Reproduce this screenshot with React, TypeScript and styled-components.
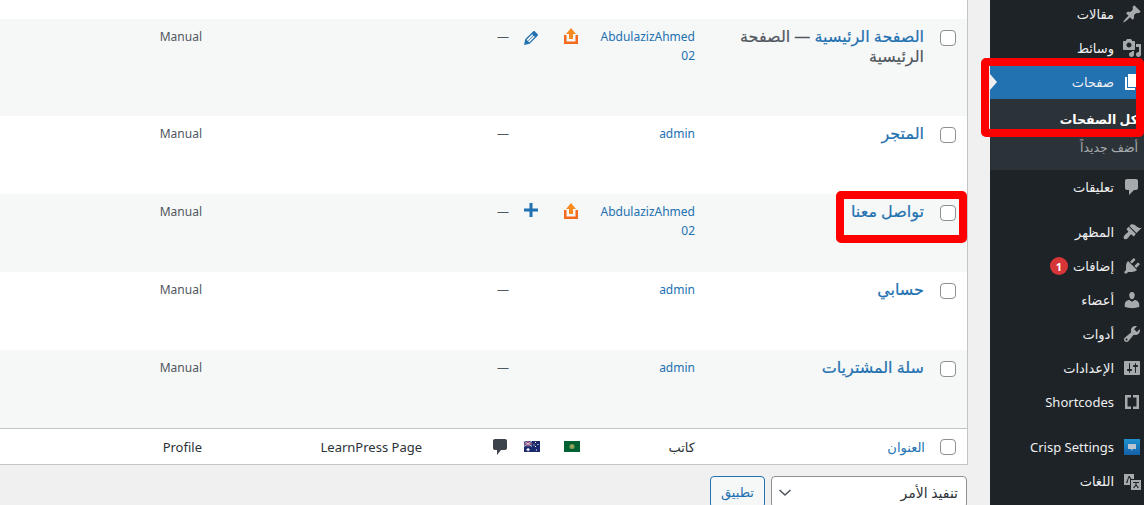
import React from "react";
import styled, { createGlobalStyle } from "styled-components";

const Global = createGlobalStyle`
  html, body { margin: 0; padding: 0; height: 505px; overflow: hidden; background: #f0f0f1; }
  body { direction: rtl; font-family: "Noto Sans", "DejaVu Sans", sans-serif; }
  * { box-sizing: border-box; }
`;

const Page = styled.div`
  display: flex;
  width: 1144px;
  height: 505px;
  overflow: hidden;
  position: relative;
`;

const Sidebar = styled.nav`
  flex: 0 0 154px;
  height: 505px;
  background: #1d2327;
  overflow: hidden;
`;

const MenuList = styled.div`
  margin-top: -3px;
  display: flex;
  flex-direction: column;
`;

const MenuItem = styled.div<{ $active?: boolean; $sep?: boolean }>`
  height: 34px;
  flex: 0 0 34px;
  margin-top: ${(p) => (p.$sep ? "11px" : "0")};
  display: flex;
  align-items: center;
  gap: 8px;
  padding-right: 2px;
  color: #f0f0f1;
  font-size: 13px;
  white-space: nowrap;
  position: relative;
  background: ${(p) => (p.$active ? "#2271b1" : "transparent")};
  svg { flex: 0 0 20px; width: 20px; height: 20px; fill: ${(p) => (p.$active ? "#fff" : "#a7aaad")}; }
`;

const Pointer = styled.span`
  position: absolute;
  left: 0;
  top: 9px;
  border-left: 7px solid #f0f0f1;
  border-top: 8px solid transparent;
  border-bottom: 8px solid transparent;
`;

const SubMenu = styled.div`
  background: #2c3338;
  height: 71px;
  padding: 7px 6px 0 0;
`;

const SubItem = styled.div<{ $current?: boolean }>`
  height: 28px;
  line-height: 28px;
  font-size: 12.5px;
  white-space: nowrap;
  font-weight: ${(p) => (p.$current ? 700 : 400)};
  color: ${(p) => (p.$current ? "#fff" : "#a7aaad")};
`;

const Badge = styled.span`
  display: inline-flex;
  align-items: center;
  justify-content: center;
  width: 18px;
  height: 18px;
  margin-right: -3px;
  border-radius: 50%;
  background: #d63638;
  color: #fff;
  font-size: 11px;
  font-weight: 700;
`;

const Main = styled.main`
  flex: 0 0 990px;
  padding-right: 22px;
  height: 505px;
  display: flex;
  flex-direction: column;
`;

const Table = styled.div`
  width: 968px;
  background: #fff;
  border-right: 1px solid #c3c4c7;
  padding-top: 19px;
  flex: 0 0 465px;
`;

const Row = styled.div<{ $h: number; $alt?: boolean }>`
  display: grid;
  grid-template-columns: 35px 227px 115px 39px 41px 78px 220px 212px;
  height: ${(p) => p.$h}px;
  background: ${(p) => (p.$alt ? "#f6f7f7" : "#fff")};
`;

const FootRow = styled(Row)`
  border-top: 1px solid #c3c4c7;
  border-bottom: 1px solid #c3c4c7;
  align-items: center;
`;

const Cell = styled.div`
  padding: 8px 10px 0;
  font-size: 12px;
  line-height: 19px;
  color: #50575e;
  text-align: right;
`;

const DashCell = styled(Cell)`
  padding-right: 1px;
`;

const FootCell = styled.div`
  padding: 1px 10px 0;
  font-size: 13px;
  line-height: 19px;
  color: #2c3338;
  text-align: right;
  white-space: nowrap;
`;

const FootLabel = styled(FootCell)`
  padding-right: 7px;
`;

const FootBubble = styled.div`
  display: flex;
  padding: 1px 3px 0 0;
  svg { display: block; }
`;

const IconCell = styled.div`
  padding-top: 9px;
  display: flex;
  justify-content: center;
  svg { display: block; }
`;

const FootIcon = styled.div`
  display: flex;
  justify-content: center;
  padding-left: 3px;
  svg { display: block; }
`;

const CheckCell = styled.div<{ $foot?: boolean }>`
  display: flex;
  justify-content: flex-start;
  padding: ${(p) => (p.$foot ? "0" : "11px")} 11px 0 0;
`;

const Check = styled.span`
  display: block;
  width: 16px;
  height: 16px;
  background: #fff;
  border: 1px solid #8c8f94;
  border-radius: 4px;
`;

const Title = styled.div`
  padding: 7px 8px 0 0;
  width: 196px;
  font-size: 16px;
  line-height: 20px;
  -webkit-text-stroke: 0.2px currentColor;
  color: #2271b1;
`;

const State = styled.span`
  color: #50575e;
`;

const Link = styled.span`
  color: #2271b1;
`;

const Author = styled.div`
  padding: 8px 10px 0;
  font-size: 12px;
  line-height: 19px;
  color: #2271b1;
  text-align: right;
  direction: ltr;
  overflow-wrap: anywhere;
`;

const Actions = styled.div`
  display: flex;
  gap: 6px;
  padding: 11px 1px 0 0;
`;

const Select = styled.div`
  width: 196px;
  height: 32px;
  background: #fff;
  border: 1px solid #8c8f94;
  border-radius: 4px;
  display: flex;
  align-items: center;
  justify-content: space-between;
  padding: 0 8px 0 6px;
  font-size: 14px;
  color: #2c3338;
  svg { display: block; }
`;

const Apply = styled.div`
  width: 55px;
  height: 32px;
  background: #f6f7f7;
  border: 1px solid #2271b1;
  border-radius: 4px;
  color: #2271b1;
  font-size: 13px;
  display: flex;
  align-items: center;
  justify-content: center;
`;

const RedBox = styled.div<{ $x: number; $y: number; $w: number; $h: number }>`
  position: absolute;
  left: ${(p) => p.$x}px;
  top: ${(p) => p.$y}px;
  width: ${(p) => p.$w}px;
  height: ${(p) => p.$h}px;
  border: 8px solid #ff0000;
  border-radius: 5px;
  pointer-events: none;
`;

const I = (d: string) => (
  <svg viewBox="0 0 20 20"><path d={d} /></svg>
);

const icons = {
  post: "M10.44 3.02l1.82-1.82 6.36 6.35-1.83 1.82c-1.05-.68-2.48-.57-3.41.36l-.75.75c-.92.93-1.04 2.35-.35 3.41l-1.83 1.82-2.41-2.41-2.8 2.79c-.42.42-3.38 2.71-3.8 2.29s1.86-3.39 2.28-3.81l2.79-2.79L4.1 9.36l1.83-1.82c1.05.69 2.48.57 3.4-.36l.75-.75c.93-.92 1.05-2.35.36-3.41z",
  media: "M13 11V4c0-.55-.45-1-1-1h-1.67L9 1H5L3.67 3H2c-.55 0-1 .45-1 1v7c0 .55.45 1 1 1h10c.55 0 1-.45 1-1zM7 4.5c1.38 0 2.5 1.12 2.5 2.5S8.38 9.5 7 9.5 4.5 8.38 4.5 7 5.62 4.5 7 4.5zM14 6h5v10.5c0 1.38-1.12 2.5-2.5 2.5S14 17.88 14 16.5s1.12-2.5 2.5-2.5c.17 0 .34.02.5.05V9h-3V6zm-4 8.05V13h2v3.5c0 1.38-1.12 2.5-2.5 2.5S7 17.88 7 16.5 8.12 14 9.5 14c.17 0 .34.02.5.05z",
  page: "M6 15V2h10v13H6zm-1 1h8v2H3V5h2v11z",
  comment: "M5 2h9c1.1 0 2 .9 2 2v7c0 1.1-.9 2-2 2h-2l-5 5v-5H5c-1.1 0-2-.9-2-2V4c0-1.1.9-2 2-2z",
  appearance: "M14.48 11.06L7.41 3.99l1.5-1.5c.5-.56 2.3-.47 3.51.32 1.21.8 1.43 1.28 2.91 2.1 1.18.64 2.45 1.26 4.45.85zm-.71.71L6.7 4.7 4.93 6.47c-.39.39-.39 1.02 0 1.41l1.06 1.06c.39.39.39 1.03 0 1.42-.6.6-1.43 1.11-2.21 1.69-.35.26-.7.53-1.01.84-1.43 1.43-1.4 3.04-.62 3.82.78.78 2.39.81 3.82-.62.31-.31.58-.66.84-1.01.58-.78 1.09-1.61 1.69-2.21.39-.39 1.03-.39 1.42 0l1.06 1.06c.39.39 1.02.39 1.41 0z",
  plugin: "M13.11 4.36L9.87 7.6 8 5.73l3.24-3.24c.35-.34 1.05-.2 1.56.32.52.51.66 1.21.31 1.55zm-8 1.77l.91-1.12 9.01 9.01-1.19.84c-.71.71-2.63 1.16-3.82 1.16H6.14L4.9 17.26c-.59.59-1.54.59-2.12 0-.59-.58-.59-1.53 0-2.12l1.24-1.24v-3.88c0-1.13.4-3.19 1.09-3.89zm7.26 3.97l3.24-3.24c.34-.35 1.04-.21 1.55.31.52.51.66 1.21.31 1.55l-3.24 3.25z",
  users: "M10 9.25c-2.27 0-2.73-3.44-2.73-3.44C7 4.02 7.82 2 9.97 2c2.16 0 2.98 2.02 2.71 3.81 0 0-.41 3.44-2.68 3.44zm0 2.57L12.72 10c2.39 0 4.52 2.33 4.52 4.53v2.49s-3.65 1.13-7.24 1.13c-3.65 0-7.24-1.13-7.24-1.13v-2.49c0-2.25 1.94-4.48 4.47-4.48z",
  tools: "M16.68 9.77c-1.34 1.34-3.3 1.67-4.95.99l-5.41 6.52c-.99.99-2.59.99-3.58 0s-.99-2.59 0-3.57l6.52-5.42c-.68-1.65-.35-3.61.99-4.95 1.28-1.28 3.12-1.62 4.72-1.06l-2.89 2.89 2.82 2.82 2.86-2.87c.53 1.58.18 3.39-1.08 4.65zM3.81 16.21c.4.39 1.04.39 1.43 0 .4-.4.4-1.04 0-1.43-.39-.4-1.03-.4-1.43 0-.39.39-.39 1.03 0 1.43z",
  settings: "M18 16V4c0-.55-.45-1-1-1H3c-.55 0-1 .45-1 1v12c0 .55.45 1 1 1h14c.55 0 1-.45 1-1zM8 11h1c.55 0 1 .45 1 1s-.45 1-1 1H8v1.5c0 .28-.22.5-.5.5s-.5-.22-.5-.5V13H6c-.55 0-1-.45-1-1s.45-1 1-1h1V5.5c0-.28.22-.5.5-.5s.5.22.5.5V11zm5-2h-1c-.55 0-1-.45-1-1s.45-1 1-1h1V5.5c0-.28.22-.5.5-.5s.5.22.5.5V7h1c.55 0 1 .45 1 1s-.45 1-1 1h-1v5.5c0 .28-.22.5-.5.5s-.5-.22-.5-.5V9z",
  brackets: "M3 3h6v2.500H5.500v9H9V17H3V3zm8 0h6v14h-6v-2.500h3.500v-9H11V3z",
};

const Crisp = () => (
  <svg viewBox="0 0 20 20" style={{ fill: "none" }}>
    <defs>
      <linearGradient id="crispFill" x1="0" y1="0" x2="0" y2="1">
        <stop offset="0" stopColor="#1f93cf" />
        <stop offset="1" stopColor="#155fa8" />
      </linearGradient>
    </defs>
    <rect x="2" y="2" width="16" height="16" fill="url(#crispFill)" />
    <path d="M6 7h8v5h-3.500L10 14l-1-2H6z" fill="#b9c6d1" />
  </svg>
);

const Translate = () => (
  <svg viewBox="0 0 20 20">
    <path d="M2 3h10v5H8v6H2z" />
    <path d="M9 9h10v10H9z" />
    <path d="M4 12l2.600-7h1L9.500 8H8.200L7 6.500 5.400 12z" fill="#1d2327" />
    <path d="M11 11h6v1h-2.500v1.500L17 17h-1.300L14 14.800 12.300 17H11l2.500-3.500V12H11z" fill="#1d2327" />
  </svg>
);

const Upload = () => (
  <svg width="14" height="16" viewBox="0 0 14 16">
    <path d="M7 0l5 6H9v5H5V6H2z" fill="#f78b1f" />
    <path d="M0 7h2.500v6.500h9V7H14v9H0z" fill="#f4691e" />
  </svg>
);

const Pencil = () => (
  <svg width="20" height="20" viewBox="0 0 20 20">
    <path fill="#2271b1" d="M13.890 3.390l2.710 2.720c.46.460.42 1.240.030 1.640l-8.010 8.020-5.560 1.160 1.160-5.580s7.600-7.630 7.990-8.030c.39-.39 1.220-.39 1.680.07zm-2.730 2.790l-5.590 5.610 1.110 1.110 5.540-5.650zm-2.970 8.230l5.580-5.600-1.070-1.080-5.590 5.600z" />
  </svg>
);

const Plus = () => (
  <svg width="14" height="14" viewBox="0 0 14 14">
    <path fill="#2271b1" d="M5.500 0h3v5.500H14v3H8.500V14h-3V8.500H0v-3h5.500z" />
  </svg>
);

const FlagSA = () => (
  <svg width="16" height="11" viewBox="0 0 16 11">
    <rect width="16" height="11" fill="#006233" />
    <circle cx="8" cy="5.500" r="2.600" fill="#7f9a55" />
    <circle cx="8" cy="5.500" r="1.200" fill="#a5a95c" />
  </svg>
);

const FlagAU = () => (
  <svg width="16" height="11" viewBox="0 0 16 11">
    <rect width="16" height="11" fill="#1a2a6c" />
    <rect width="8" height="5.500" fill="#3b4a8c" />
    <path d="M0 2.300h8v1H0zM3.500 0h1v5.500h-1z" fill="#e05a66" />
    <path d="M0 0l8 5.500M8 0L0 5.500" stroke="#d9dbe8" strokeWidth=".8" />
    <path d="M3.500 7h1.200v1h1v1.200h-1v1H3.500v-1h-1V8h1z" fill="#fff" />
    <path d="M11 1h1v1h-1zM13.500 3h1v1h-1zM11 5h1v1h-1zM12 8.500h1v1h-1zM9.500 3.500h1v1h-1z" fill="#fff" />
  </svg>
);

const Bubble = () => (
  <svg width="14" height="16" viewBox="0 0 14 16">
    <path fill="#3c434a" d="M2 0h10c1.200 0 2 .8 2 2v7c0 1.200-.8 2-2 2H8l-4 5v-5H2c-1.200 0-2-.8-2-2V2C0 .8.800 0 2 0z" />
  </svg>
);

const Chevron = () => (
  <svg width="14" height="14" viewBox="0 0 14 14">
    <path d="M1.500 5l5.500 5 5.500-5" fill="none" stroke="#50575e" strokeWidth="1.600" />
  </svg>
);

type RowData = {
  h: number;
  alt?: boolean;
  title: React.ReactNode;
  author: string;
  flag?: "upload";
  action?: "edit" | "add";
};

const rows: RowData[] = [
  {
    h: 97,
    alt: true,
    title: (
      <>
        <Link>الصفحة الرئيسية</Link> <State>— الصفحة الرئيسية</State>
      </>
    ),
    author: "AbdulazizAhmed 02",
    flag: "upload",
    action: "edit",
  },
  { h: 78, title: <Link>المتجر</Link>, author: "admin" },
  { h: 78, alt: true, title: <Link>تواصل معنا</Link>, author: "AbdulazizAhmed 02", flag: "upload", action: "add" },
  { h: 78, title: <Link>حسابي</Link>, author: "admin" },
  { h: 78, alt: true, title: <Link>سلة المشتريات</Link>, author: "admin" },
];

export default function App() {
  return (
    <Page>
      <Global />
      <Sidebar>
        <MenuList>
          <MenuItem>{I(icons.post)}<span>مقالات</span></MenuItem>
          <MenuItem>{I(icons.media)}<span>وسائط</span></MenuItem>
          <MenuItem $active>{I(icons.page)}<span>صفحات</span><Pointer /></MenuItem>
          <SubMenu>
            <SubItem $current>كل الصفحات</SubItem>
            <SubItem>أضف جديداً</SubItem>
          </SubMenu>
          <MenuItem>{I(icons.comment)}<span>تعليقات</span></MenuItem>
          <MenuItem $sep>{I(icons.appearance)}<span>المظهر</span></MenuItem>
          <MenuItem>{I(icons.plugin)}<span>إضافات</span><Badge>1</Badge></MenuItem>
          <MenuItem>{I(icons.users)}<span>أعضاء</span></MenuItem>
          <MenuItem>{I(icons.tools)}<span>أدوات</span></MenuItem>
          <MenuItem>{I(icons.settings)}<span>الإعدادات</span></MenuItem>
          <MenuItem>{I(icons.brackets)}<span>Shortcodes</span></MenuItem>
          <MenuItem $sep><Crisp /><span>Crisp Settings</span></MenuItem>
          <MenuItem><Translate /><span>اللغات</span></MenuItem>
        </MenuList>
      </Sidebar>
      <Main>
        <Table>
          {rows.map((r, i) => (
            <Row key={i} $h={r.h} $alt={r.alt}>
              <CheckCell><Check /></CheckCell>
              <Title>{r.title}</Title>
              <Author>{r.author}</Author>
              <IconCell>{r.flag === "upload" && <Upload />}</IconCell>
              <IconCell>
                {r.action === "edit" && <Pencil />}
                {r.action === "add" && <Plus />}
              </IconCell>
              <DashCell>—</DashCell>
              <Cell />
              <Cell>Manual</Cell>
            </Row>
          ))}
          <FootRow $h={37}>
            <CheckCell $foot><Check /></CheckCell>
            <FootLabel><Link>العنوان</Link></FootLabel>
            <FootCell>كاتب</FootCell>
            <FootIcon><FlagSA /></FootIcon>
            <FootIcon><FlagAU /></FootIcon>
            <FootBubble><Bubble /></FootBubble>
            <FootCell>LearnPress Page</FootCell>
            <FootCell>Profile</FootCell>
          </FootRow>
        </Table>
        <Actions>
          <Select><span>تنفيذ الأمر</span><Chevron /></Select>
          <Apply>تطبيق</Apply>
        </Actions>
      </Main>
      <RedBox $x={981} $y={58} $w={163} $h={79} />
      <RedBox $x={836} $y={191} $w={131} $h={52} />
    </Page>
  );
}
